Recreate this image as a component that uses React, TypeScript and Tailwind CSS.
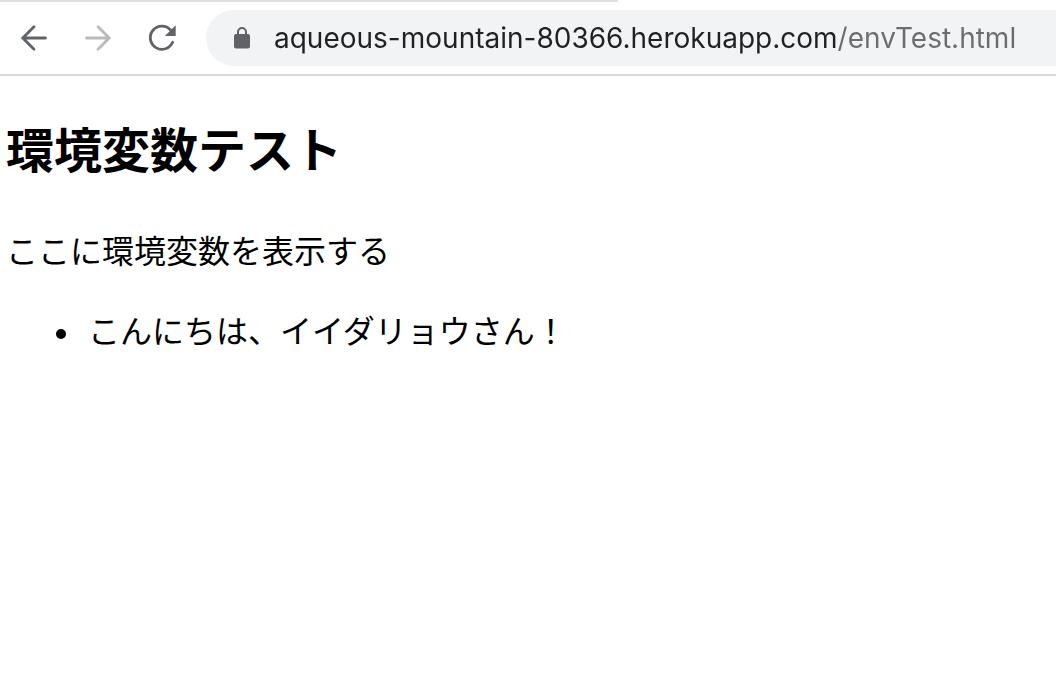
import React from "react";

function BackIcon({ className }: { className: string }) {
  return (
    <svg viewBox="0 0 28 28" className={className} fill="none" stroke="currentColor" strokeWidth="2.8" strokeLinecap="round" strokeLinejoin="miter" aria-hidden="true">
      <path d="M25.5 14H3M14 2.8L2.8 14L14 25.2" />
    </svg>
  );
}

function ReloadIcon() {
  return (
    <svg viewBox="0 0 28 28" className="size-7" fill="none" aria-hidden="true">
      <path d="M24.6 18.2A11.6 11.6 0 1 1 22.6 6" stroke="currentColor" strokeWidth="2.8" strokeLinecap="round" />
      <path d="M27.7 1.2V12H16.9Z" fill="currentColor" />
    </svg>
  );
}

function LockIcon() {
  return (
    <svg viewBox="0 0 16 22" className="h-[22px] w-4 shrink-0 text-[#5f6368]" aria-hidden="true">
      <path d="M4 8V5a4 4 0 0 1 8 0v3" fill="none" stroke="currentColor" strokeWidth="2" />
      <rect x="0" y="7" width="16" height="14.4" rx="2" fill="currentColor" />
    </svg>
  );
}

export default function App() {
  return (
    <div className="min-h-screen overflow-x-hidden bg-white font-['Liberation_Serif','Noto_Sans_CJK_JP',sans-serif] text-black">
      <header className="border-b-2 border-[#dadada]">
        <div className="h-0.5 w-[618px] rounded-br-sm bg-[#dedede]" />
        <div className="flex items-center py-2 pl-5">
          <nav aria-label="Browser navigation" className="mr-[30px] flex shrink-0 items-center gap-9 text-[#5f6368]">
            <button type="button" aria-label="Back">
              <BackIcon className="size-7" />
            </button>
            <button type="button" aria-label="Forward" disabled>
              <BackIcon className="size-7 rotate-180 text-[#bababa]" />
            </button>
            <button type="button" aria-label="Reload">
              <ReloadIcon />
            </button>
          </nav>
          <label className="flex h-14 min-w-0 flex-1 items-center gap-6 rounded-l-full bg-[#f1f3f4] pl-7">
            <LockIcon />
            <input
              type="text"
              aria-label="Address"
              defaultValue="aqueous-mountain-80366.herokuapp.com/envTest.html"
              className="h-10 min-w-0 flex-1 bg-linear-to-r from-[#202124] from-[563px] to-[#6b6d70] to-[563px] bg-clip-text font-['Inter','Liberation_Sans',sans-serif] text-[28px] text-transparent caret-black outline-none"
            />
          </label>
        </div>
      </header>
      <main className="px-1.5 py-10">
        <h2 className="text-[48px] leading-[72px] font-bold">環境変数テスト</h2>
        <p className="mt-10 text-[32px] leading-12">ここに環境変数を表示する</p>
        <ul className="mt-8 list-disc pl-19 text-[32px] leading-12">
          <li className="pl-1.5">こんにちは、イイダリョウさん！</li>
        </ul>
      </main>
    </div>
  );
}
